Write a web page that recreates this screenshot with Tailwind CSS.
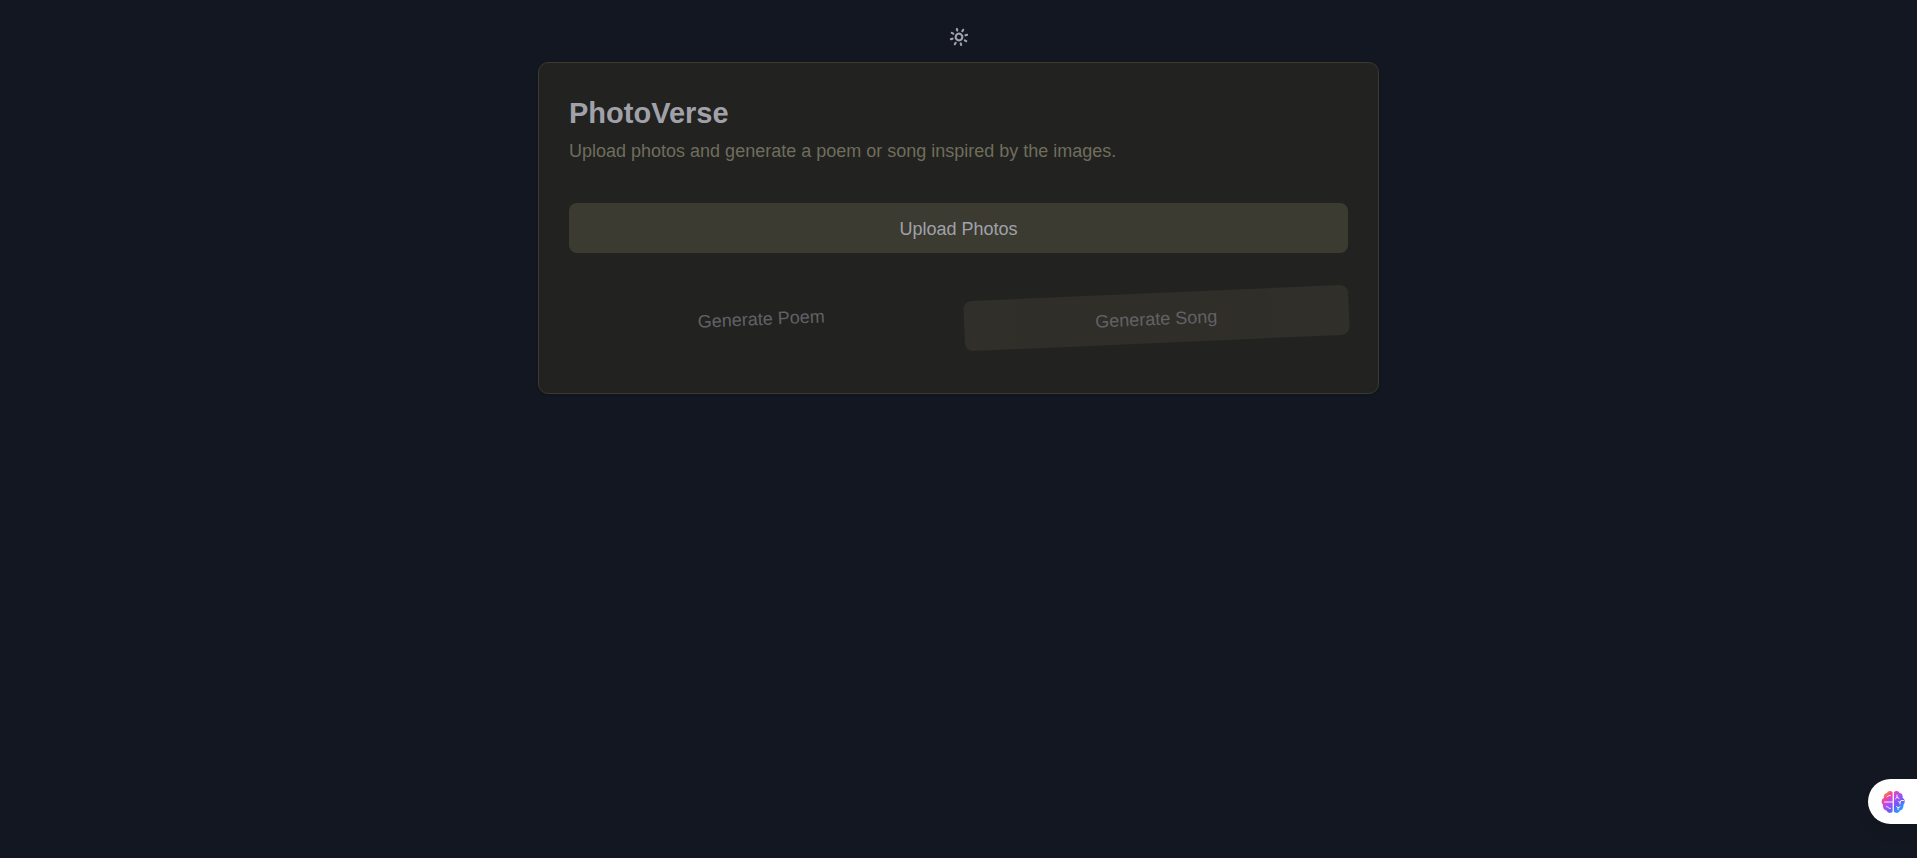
<!DOCTYPE html>
<html lang="en">
<head>
<meta charset="utf-8">
<meta name="viewport" content="width=device-width, initial-scale=1">
<title>PhotoVerse</title>
<script src="https://cdn.jsdelivr.net/npm/@tailwindcss/browser@4"></script>
</head>
<body class="min-h-screen bg-[#121721] font-['Liberation_Sans',Arial,sans-serif] text-[#a1a1aa]">
<main class="mx-auto flex w-full max-w-[841px] flex-col pt-3">
  <button type="button" aria-label="Toggle theme" class="mx-auto flex size-[50px] items-center justify-center rounded-lg">
    <svg class="size-5 -rotate-15" viewBox="0 0 24 24" fill="none" stroke="currentColor" stroke-width="2.6" stroke-linecap="round" stroke-linejoin="round" aria-hidden="true">
      <circle cx="12" cy="12" r="4"/>
      <path d="M12 2v2M12 20v2M4.93 4.93l1.41 1.41M17.66 17.66l1.41 1.41M2 12h2M20 12h2M6.34 17.66l-1.41 1.41M19.07 4.93l-1.41 1.41"/>
    </svg>
  </button>
  <section class="rounded-[10px] border border-[#3b3a2f] bg-[#222220] p-[30px] shadow-sm">
    <h1 class="pt-1 text-[29px] leading-8 font-bold">PhotoVerse</h1>
    <p class="mt-2.5 text-[18px] leading-6 text-[#6f6e5c]">Upload photos and generate a poem or song inspired by the images.</p>
    <button type="button" class="mt-10 h-[50px] w-full rounded-lg bg-[#3c3b32] pt-0.5 text-[18px] font-medium">Upload Photos</button>
    <div class="mt-10 mb-5 grid grid-cols-2 gap-[10px]">
      <button type="button" disabled class="h-[50px] -rotate-[2.5deg] rounded-lg pt-0.5 text-[18px] font-medium opacity-50">Generate Poem</button>
      <button type="button" disabled class="h-[50px] -rotate-[2.5deg] rounded-lg bg-[#3e3b32] pt-0.5 text-[18px] font-medium opacity-50">Generate Song</button>
    </div>
  </section>
</main>
<button type="button" aria-label="Open assistant" class="fixed right-0 bottom-[34px] flex h-[45px] w-[49px] items-center rounded-l-full bg-white pl-[13px] shadow-lg">
  <svg class="size-6" viewBox="0 0 24 24" fill="none" aria-hidden="true">
    <defs>
      <linearGradient id="brain" x1="3" y1="2" x2="20" y2="22" gradientUnits="userSpaceOnUse">
        <stop offset="0" stop-color="#ffb000"/><stop offset=".22" stop-color="#f5419b"/><stop offset=".45" stop-color="#b14df5"/><stop offset=".7" stop-color="#6b5cf6"/><stop offset="1" stop-color="#13b5ff"/>
      </linearGradient>
    </defs>
    <path fill="url(#brain)" d="M11.600 2.500C10 .2 6.600 .6 6 3 3.600 3.200 2.200 5.500 3 7.700 .2 9 0 12.800 2 14.800 1.600 17.700 3 20.200 5.500 20.600 6.600 23.500 10 23.800 11.600 21.600ZM12.900 2.500C14.500 .2 17.900 .6 18.500 3 20.900 3.200 22.300 5.500 21.500 7.700 24.200 9 24.300 12.800 22.400 14.800 22.800 17.700 21.400 20.200 19 20.600 17.900 23.500 14.500 23.800 12.900 21.600Z"/>
    <path stroke="#fff" stroke-width=".9" stroke-linecap="round" stroke-linejoin="round" d="M11.500 12H3.500M9.500 5.500C8.500 5 7.500 5.700 6 7M5.500 16.500C7 16.500 7 18.500 9.500 18.500M16 5v2.300l-1.500 1.500M16 7.300l2 1.200M22.500 10.500h-2.500l-1 2-1.500-1M19 12.500v1.500M15.500 16.500l1.500 1.200 2-.9M17 17.700v2"/>
  </svg>
</button>
</body>
</html>
